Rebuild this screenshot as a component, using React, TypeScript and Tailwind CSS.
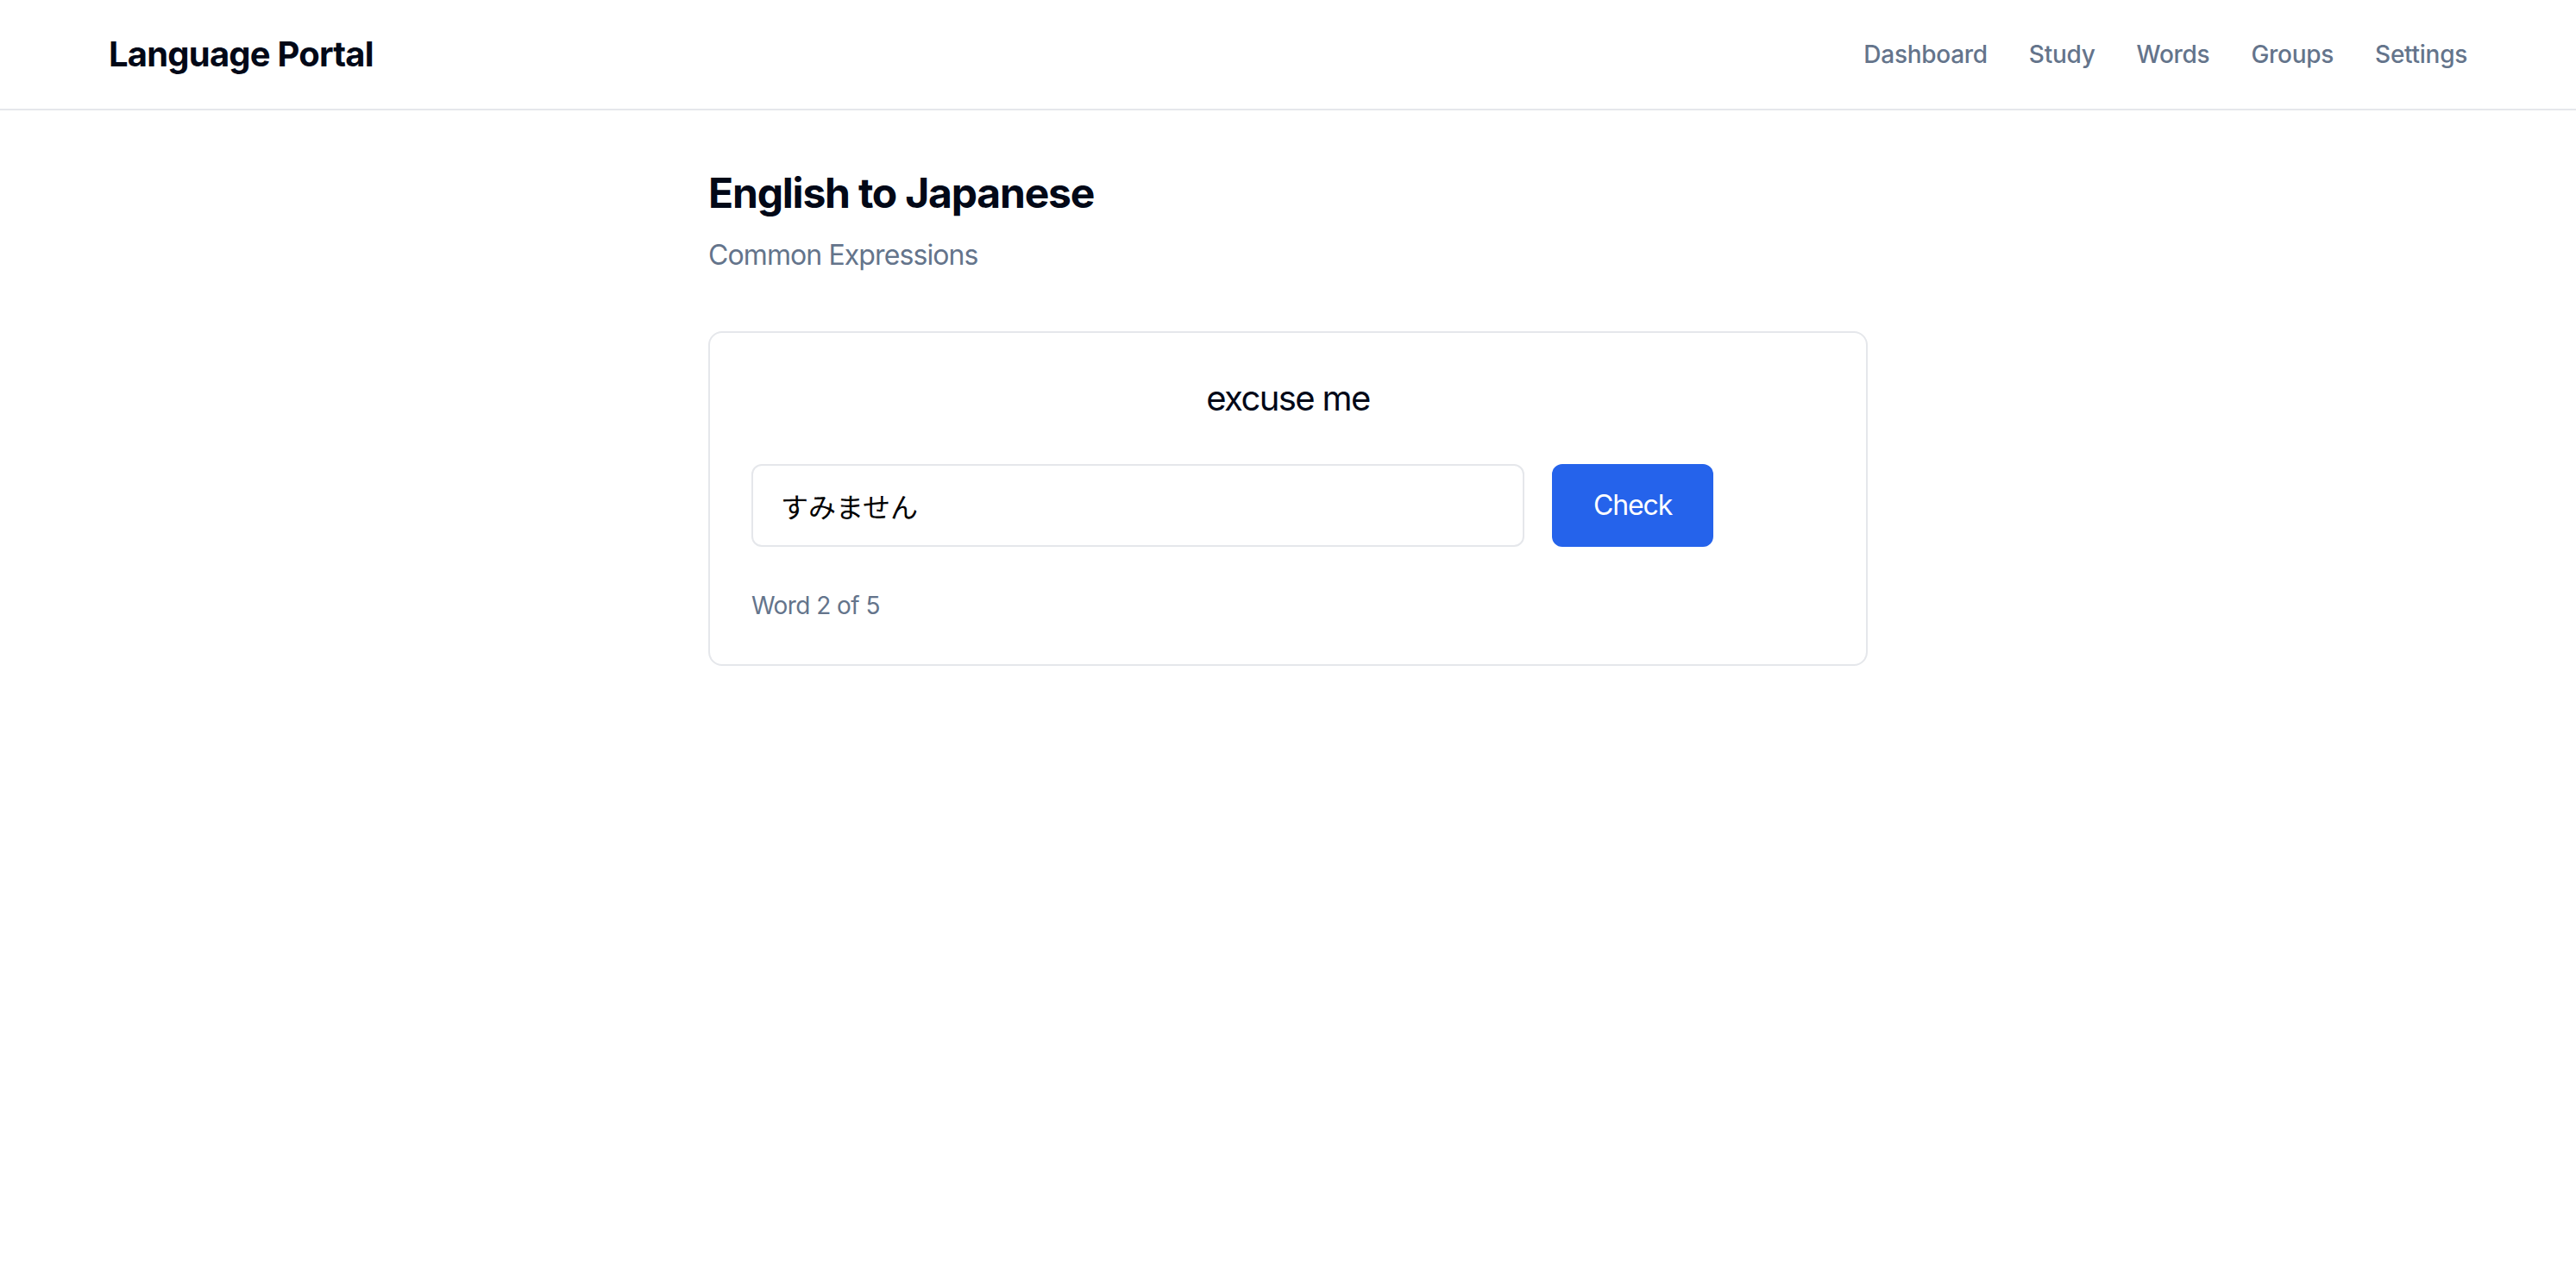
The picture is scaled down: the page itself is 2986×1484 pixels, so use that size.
import { useState } from "react";

const navLinks = ["Dashboard", "Study", "Words", "Groups", "Settings"];

export default function App() {
  const [answer, setAnswer] = useState("すみません");

  return (
    <div className="min-h-screen bg-white font-['Inter','Noto_Sans_CJK_JP',sans-serif] text-[#020817]">
      {/* Header */}
      <header className="h-32 border-b-2 border-[#e5e7eb]">
        <div className="flex h-full items-center justify-between px-[126px]">
          <span className="text-[40px] font-bold leading-[56px] tracking-[-0.02em]">Language Portal</span>
          <nav className="flex items-center gap-12">
            {navLinks.map((link) => (
              <a
                key={link}
                href="#"
                className="text-[28px] font-medium leading-[40px] tracking-[-0.01em] text-[#64748b]"
              >
                {link}
              </a>
            ))}
          </nav>
        </div>
      </header>

      {/* Study session */}
      <main className="mx-auto max-w-[1344px] pt-16">
        <h1 className="text-[48px] font-bold leading-[64px] tracking-[-0.025em]">English to Japanese</h1>
        <p className="mt-4 text-[32px] leading-[48px] tracking-[-0.028em] text-[#64748b]">Common Expressions</p>

        <div className="mt-16 flex flex-col gap-12 rounded-2xl border-2 border-[#e5e7eb] p-12">
          <p className="text-center text-[40px] leading-[56px] tracking-[-0.04em]">excuse me</p>
          <div className="flex gap-8">
            <input
              value={answer}
              onChange={(e) => setAnswer(e.target.value)}
              className="h-24 w-[896px] rounded-xl border-2 border-[#e5e7eb] px-8 text-[32px] text-black outline-none"
            />
            <button className="h-24 rounded-xl bg-[#2563eb] px-12 text-[32px] tracking-[-0.035em] text-white">
              Check
            </button>
          </div>
          <p className="text-[28px] leading-[40px] tracking-[-0.02em] text-[#64748b]">Word 2 of 5</p>
        </div>
      </main>
    </div>
  );
}
